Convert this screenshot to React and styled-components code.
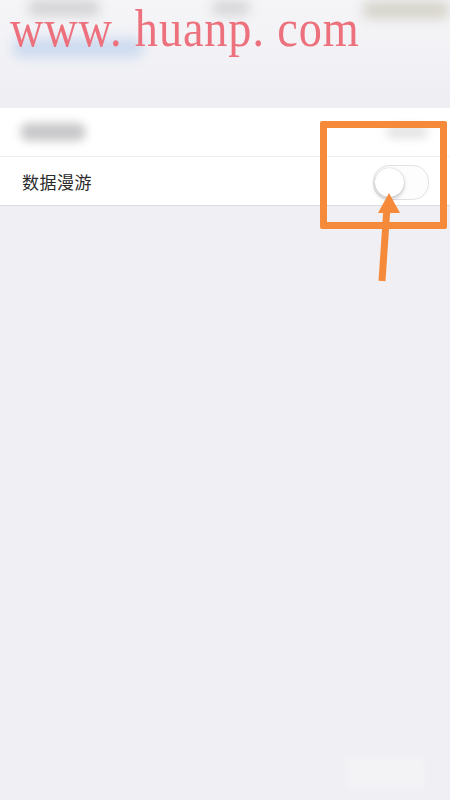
import React from "react";
import styled, { createGlobalStyle } from "styled-components";

const Global = createGlobalStyle`
  html, body { margin: 0; padding: 0; }
  body {
    width: 450px;
    height: 800px;
    overflow: hidden;
    background: #efeff4;
    font-family: "Noto Sans CJK SC", "Noto Sans", sans-serif;
  }
`;

const Screen = styled.div`
  position: relative;
  width: 450px;
  height: 800px;
  background: #efeff4;
  overflow: hidden;
`;

const Header = styled.div`
  height: 108px;
  display: flex;
  flex-direction: column;
  background: linear-gradient(#f5f5f8, #f1f1f5 70%, #ededf2);
`;

const StatusBar = styled.div`
  height: 26px;
  display: flex;
  align-items: flex-start;
  justify-content: space-between;
  padding: 0 0 0 28px;
`;

const Blur = styled.div`
  width: ${(p) => p.$w}px;
  height: ${(p) => p.$h}px;
  margin-top: ${(p) => p.$t || 0}px;
  background: ${(p) => p.$c};
  border-radius: ${(p) => p.$h / 2}px;
  filter: blur(${(p) => p.$b || 5}px);
`;

const NavBar = styled.div`
  height: 44px;
  display: flex;
  align-items: center;
  padding-left: 12px;
`;

const Group = styled.div`
  background: #ffffff;
  border-bottom: 1px solid #dcdce0;
  display: flex;
  flex-direction: column;
`;

const Row = styled.div`
  height: 48px;
  display: flex;
  align-items: center;
  justify-content: space-between;
  padding: 0 22px 0 20px;
  border-bottom: ${(p) => (p.$sep ? "1px solid #efeff2" : "none")};
`;

const Label = styled.span`
  font-size: 17px;
  color: #2a2a2a;
  letter-spacing: 0.5px;
  margin-left: 2px;
`;

const Switch = styled.div`
  width: 52px;
  height: 31px;
  border-radius: 16px;
  border: 1px solid #e2e2e6;
  background: #fdfdfd;
  display: flex;
  align-items: center;
  padding: 1px;
  margin-right: -1px;
  margin-top: 2px;
`;

const Knob = styled.div`
  width: 29px;
  height: 29px;
  border-radius: 50%;
  background: #ffffff;
  box-shadow: 0 2px 4px rgba(0, 0, 0, 0.22), 0 0 1px rgba(0, 0, 0, 0.25);
`;

const Watermark = styled.div`
  position: absolute;
  left: 10px;
  top: 0;
  font-family: "Liberation Serif", serif;
  font-size: 52px;
  line-height: 58px;
  color: #ec717d;
  white-space: pre;
  transform-origin: left top;
  transform: scaleX(0.89);
  letter-spacing: 1px;
`;

const Highlight = styled.div`
  position: absolute;
  left: 320px;
  top: 121px;
  width: 127px;
  height: 108px;
  box-sizing: border-box;
  border: 7px solid #f68a3b;
  border-radius: 2px;
`;

const Arrow = styled.svg`
  position: absolute;
  left: 360px;
  top: 185px;
`;

const Faint = styled.div`
  position: absolute;
  left: 345px;
  top: 756px;
  width: 80px;
  height: 34px;
  background: #f3f3f6;
  filter: blur(3px);
`;

export default function App() {
  return (
    <Screen>
      <Global />
      <Header>
        <StatusBar>
          <Blur $w={72} $h={14} $t={1} $c="#d0d0d3" $b={6} />
          <Blur $w={38} $h={14} $t={1} $c="#d4d4d7" $b={6} />
          <Blur $w={88} $h={18} $t={1} $c="#d6d4cb" $b={6} />
        </StatusBar>
        <NavBar>
          <Blur $w={132} $h={20} $c="#cddbef" $b={6} />
        </NavBar>
      </Header>
      <Group>
        <Row $sep>
          <Blur $w={66} $h={18} $c="#c8c8ca" $b={5} />
          <Blur $w={42} $h={12} $c="#e2e2e3" $b={5} />
        </Row>
        <Row>
          <Label>数据漫游</Label>
          <Switch>
            <Knob />
          </Switch>
        </Row>
      </Group>
      <Watermark>{"www. huanp. com"}</Watermark>
      <Highlight />
      <Arrow width="50" height="105" viewBox="0 0 50 105">
        <line x1="22" y1="96" x2="27" y2="22" stroke="#f68a3b" strokeWidth="7" strokeLinecap="butt" />
        <polygon points="29,8 18,28 40,28" fill="#f68a3b" />
      </Arrow>
      <Faint />
    </Screen>
  );
}
